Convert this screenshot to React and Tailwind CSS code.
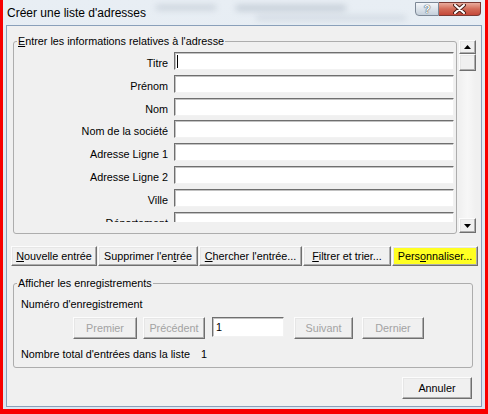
import React from "react";

const sunken =
  "border border-t-[#6f6f6f] border-l-[#6f6f6f] border-b-[#f2f2f2] border-r-[#f2f2f2] shadow-[inset_1px_1px_0_#c2c2c2] bg-white";
const raised =
  "border border-t-[#fcfcfc] border-l-[#fcfcfc] border-b-[#6f6f6f] border-r-[#6f6f6f] shadow-[inset_-1px_-1px_0_#adadad,inset_1px_1px_0_#e6e6e6]";

const fields = [
  "Titre",
  "Prénom",
  "Nom",
  "Nom de la société",
  "Adresse Ligne 1",
  "Adresse Ligne 2",
  "Ville",
  "Département",
];

const Btn = ({ className = "", children }) => (
  <div className={`${raised} h-[20px] flex items-center justify-center leading-[12px] ${className}`}>
    {children}
  </div>
);

const NavBtn = ({ className = "", children }) => (
  <div className={`${raised} bg-[#f0f0f0] h-[22px] flex items-center justify-center text-[#a3a3a3] leading-[12px] ${className}`}>
    {children}
  </div>
);

const Arrow = ({ up }) => (
  <svg width="7" height="4" viewBox="0 0 7 4">
    {up ? <path d="M0 4 L3.5 0 L7 4 Z" fill="#000" /> : <path d="M0 0 L7 0 L3.5 4 Z" fill="#000" />}
  </svg>
);

export default function App() {
  return (
    <div className="w-[488px] h-[414px] bg-[#f80000] px-[3px] pb-[5px] overflow-hidden font-['Liberation_Sans',Arial,sans-serif] text-[10.8px] text-black">
      <div className="h-full flex flex-col bg-gradient-to-b from-[#e8eef4] via-[#e2eaf2] to-[#dbe6f1] px-[3px] pb-[2px]">
        {/* title bar */}
        <div className="h-[25px] flex items-start relative">
          {/* blurred glass background */}
          <div className="absolute inset-0 pointer-events-none overflow-hidden">
            <span className="absolute left-[150px] top-[5px] w-[60px] h-[5px] bg-[#9aa6b4] opacity-40 blur-[3px]" />
            <span className="absolute left-[230px] top-[5px] w-[110px] h-[6px] bg-[#8e9bab] opacity-40 blur-[3px]" />
            <span className="absolute left-[250px] top-[16px] w-[150px] h-[4px] bg-[#8e9bab] opacity-30 blur-[3px]" />
          </div>
          <span className="relative mt-[6px] ml-[1px] text-[12px] leading-[14px]">Créer une liste d'adresses</span>
          <div className="relative ml-auto mr-[1px] mt-[2px] flex">
            <div className="w-[24px] h-[14px] rounded-bl-[4px] border border-[#7d8896] bg-gradient-to-b from-[#f4f6f9] via-[#dce3ea] to-[#c6d0db] flex items-center justify-center text-[11px] font-bold leading-[12px] text-white [text-shadow:0_0_1px_#2a3440,0_0_1px_#2a3440]">
              ?
            </div>
            <div className="w-[42px] h-[14px] rounded-br-[4px] border border-l-0 border-[#7a3a34] bg-gradient-to-b from-[#e8ab9d] via-[#d26b58] to-[#c4483a] flex items-center justify-center">
              <svg width="13" height="10" viewBox="0 0 13 10">
                <path d="M2 1 L11 9 M11 1 L2 9" stroke="#4a1f1a" strokeWidth="4" strokeLinecap="round" />
                <path d="M2 1 L11 9 M11 1 L2 9" stroke="#fff" strokeWidth="2" strokeLinecap="round" />
              </svg>
            </div>
          </div>
        </div>

        {/* dialog body */}
        <div className="flex-1 bg-[#f0f0f0] border border-[#8aa0ba] flex flex-col">
          <div className="flex mt-[9px] ml-[6px]">
            <fieldset className="w-[444px] border border-[#adadad] rounded-[3px] pb-[11px]">
              <legend className="ml-[3px] px-[1px] leading-[12px]">
                <span className="underline">E</span>ntrer les informations relatives à l'adresse
              </legend>
              <div className="h-[175px] overflow-hidden pt-[5px]">
                <div className="flex flex-col gap-[4.8px]">
                  {fields.map((f, i) => (
                    <div key={f} className="flex items-center h-[18px]">
                      <span className="w-[154px] text-right leading-[12px] pt-[4px] whitespace-nowrap">{f}</span>
                      <div className={`${sunken} ml-[6px] w-[280px] h-[18px] flex items-center`}>
                        {i === 0 && <span className="ml-[2px] w-px h-[13px] bg-black" />}
                      </div>
                    </div>
                  ))}
                </div>
              </div>
            </fieldset>
            {/* scrollbar */}
            <div className="ml-[2px] mt-[5px] w-[17px] h-[193px] flex flex-col bg-[#f2f2f2]">
              <div className={`${raised} bg-[#f0f0f0] h-[14px] flex items-center justify-center`}>
                <Arrow up />
              </div>
              <div className={`${raised} bg-[#f0f0f0] h-[17px]`} />
              <div className="flex-1 bg-gradient-to-r from-[#f0f0f0] via-[#f7f7f7] to-[#f0f0f0]" />
              <div className={`${raised} bg-[#f0f0f0] h-[15px] flex items-center justify-center`}>
                <Arrow />
              </div>
            </div>
          </div>

          {/* action buttons */}
          <div className="flex gap-[1px] mt-[12px] ml-[4px]">
            <Btn className="w-[86px] bg-[#f0f0f0]">
              <span className="underline">N</span>ouvelle entrée
            </Btn>
            <Btn className="w-[100px] bg-[#f0f0f0]">
              Supprimer l'en<span className="underline">t</span>rée
            </Btn>
            <Btn className="w-[103px] bg-[#f0f0f0]">
              <span className="underline">C</span>hercher l'entrée...
            </Btn>
            <Btn className="w-[88px] bg-[#f0f0f0]">
              <span className="underline">F</span>iltrer et trier...
            </Btn>
            <Btn className="w-[86px] bg-[#ffff22]">
              Pers<span className="underline">o</span>nnaliser...
            </Btn>
          </div>

          {/* records */}
          <fieldset className="mt-[11px] ml-[6px] w-[460px] border border-[#adadad] rounded-[3px] pl-[7px] pb-[7px]">
            <legend className="ml-[-4px] px-[1px] leading-[12px]">Afficher les enregistrements</legend>
            <div className="mt-[9px] leading-[12px]">
              Numéro d'enre<span className="underline">g</span>istrement
            </div>
            <div className="mt-[7px] ml-[52px] flex items-start">
              <NavBtn className="w-[64px]">Premier</NavBtn>
              <NavBtn className="w-[62px] ml-[6px]">Précédent</NavBtn>
              <div className={`${sunken} ml-[7px] w-[72px] h-[20px] flex items-center pl-[3px] leading-[12px]`}>1</div>
              <NavBtn className="w-[59px] ml-[10px]">Suivant</NavBtn>
              <NavBtn className="w-[62px] ml-[9px]">Dernier</NavBtn>
            </div>
            <div className="mt-[9px] flex leading-[12px]">
              <span>Nombre total d'entrées dans la liste</span>
              <span className="ml-[11px]">1</span>
            </div>
          </fieldset>

          <div className="mt-[9px] mr-[9px] self-end">
            <div className={`${raised} bg-[#f0f0f0] w-[70px] h-[22px] flex items-center justify-center leading-[12px]`}>
              Annuler
            </div>
          </div>
        </div>
      </div>
    </div>
  );
}
